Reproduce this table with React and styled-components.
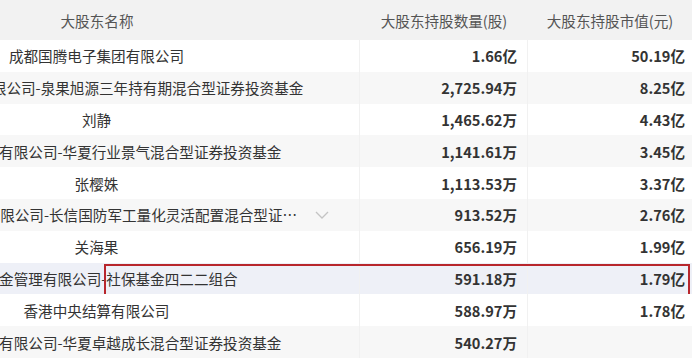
import React from "react";
import styled, { createGlobalStyle } from "styled-components";

const Global = createGlobalStyle`
  html, body { margin: 0; padding: 0; background: #ffffff; overflow: hidden; }
  body { font-family: "Noto Sans CJK SC", "Noto Sans", sans-serif; }
`;

const Viewport = styled.div`
  width: 692px;
  height: 358px;
  overflow: hidden;
`;

const Table = styled.div`
  width: 840px;
  margin-left: -148px;
  display: flex;
  flex-direction: column;
`;

const Row = styled.div`
  position: relative;
  display: grid;
  grid-template-columns: 508px 168px 164px;
  height: ${(p) => (p.$head ? "40px" : "31.8px")};
  background: ${(p) =>
    p.$head ? "#f2f2f2" : p.$hl ? "#eef0f7" : p.$alt ? "#f7f7f7" : "#ffffff"};
`;

const Cell = styled.div`
  display: flex;
  align-items: center;
  min-width: 0;
  font-size: 14.6px;
  color: ${(p) => (p.$head ? "#555" : "#333")};
  font-weight: ${(p) => (p.$num ? 700 : 400)};
  justify-content: ${(p) => (p.$num ? "flex-end" : "center")};
  padding: ${(p) => p.$pad};
  border-right: ${(p) => (p.$head || p.$last ? "none" : "1px solid #f1f1f1")};
  white-space: nowrap;
  box-sizing: border-box;
`;

const NameText = styled.span`
  flex: 1;
  min-width: 0;
  text-align: center;
  overflow: hidden;
  text-overflow: ellipsis;
  white-space: nowrap;
`;

const Chevron = styled.svg`
  flex: none;
  width: 14px;
  height: 8px;
  margin-left: 16px;
`;

const Mark = styled.div`
  position: absolute;
  left: 252px;
  right: 2px;
  top: 1px;
  bottom: -3px;
  border: 2px solid #b8262c;
  pointer-events: none;
`;

const rows = [
  ["成都国腾电子集团有限公司", "1.66亿", "50.19亿"],
  ["泉果基金管理有限公司-泉果旭源三年持有期混合型证券投资基金", "2,725.94万", "8.25亿"],
  ["刘静", "1,465.62万", "4.43亿"],
  ["华夏基金管理有限公司-华夏行业景气混合型证券投资基金", "1,141.61万", "3.45亿"],
  ["张樱姝", "1,113.53万", "3.37亿"],
  ["长信基金管理有限公司-长信国防军工量化灵活配置混合型证券投资基金", "913.52万", "2.76亿", true],
  ["关海果", "656.19万", "1.99亿"],
  ["华夏基金管理有限公司-社保基金四二二组合", "591.18万", "1.79亿"],
  ["香港中央结算有限公司", "588.97万", "1.78亿"],
  ["华夏基金管理有限公司-华夏卓越成长混合型证券投资基金", "540.27万", ""],
];

export default function App() {
  return (
    <Viewport>
      <Global />
      <Table>
        <Row $head>
          <Cell $head $pad="0 30px 0 12px">大股东名称</Cell>
          <Cell $head $pad="0 8px">大股东持股数量(股)</Cell>
          <Cell $head $pad="0 8px">大股东持股市值(元)</Cell>
        </Row>
        {rows.map(([name, qty, val, more], i) => (
          <Row key={i} $alt={i % 2 === 1} $hl={i === 7}>
            <Cell $pad={more ? "0 30px 0 46px" : "0 30px 0 12px"}>
              <NameText>{name}</NameText>
              {more && (
                <Chevron viewBox="0 0 14 8">
                  <path d="M1 1 L7 7 L13 1" fill="none" stroke="#c4c4c4" strokeWidth="1.3" />
                </Chevron>
              )}
            </Cell>
            <Cell $num $pad="0 10px 0 8px">{qty}</Cell>
            <Cell $num $last $pad="0 7px 0 8px">{val}</Cell>
            {i === 7 && <Mark />}
          </Row>
        ))}
      </Table>
    </Viewport>
  );
}
